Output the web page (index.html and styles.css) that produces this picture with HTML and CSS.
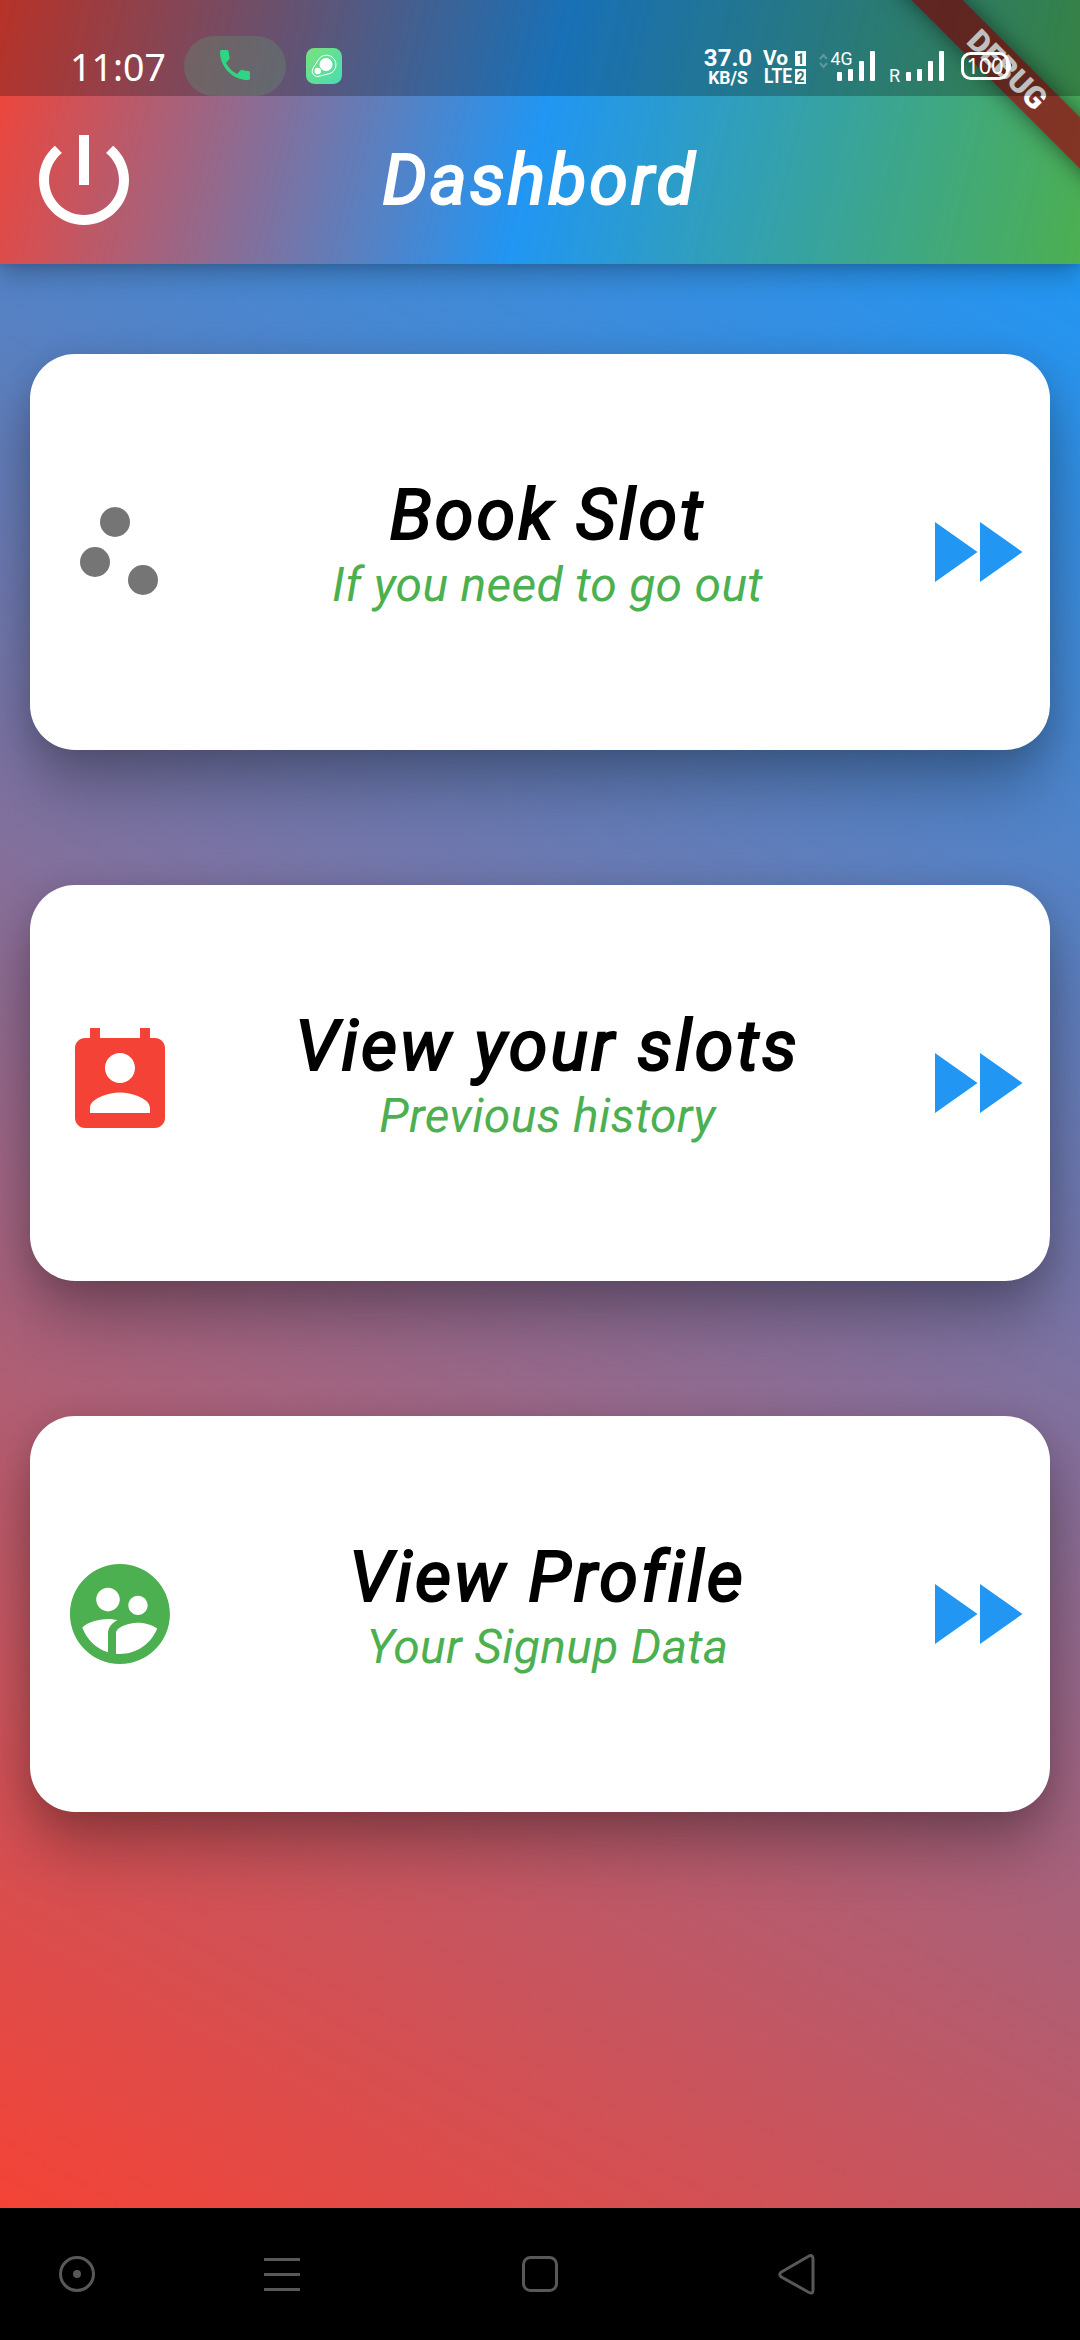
FILE: index.html
```
<!DOCTYPE html>
<html lang="en">
<head>
<meta charset="utf-8">
<title>Dashbord</title>
<link rel="stylesheet" href="styles.css">
</head>
<body>
<div class="phone">
  <header class="header">
    <div class="status">
      <span class="clock">11:07</span>
      <span class="call"><svg viewBox="0 0 30 30" width="30" height="30"><path fill="#2ed583" d="M0 1.7C0 .7.7 0 1.700 0h5.200c.9 0 1.600.7 1.700 1.600.1 2 .500 4 1.100 5.900.2.600 0 1.200-.4 1.700L6 12.900c2.400 4.700 6.300 8.600 11.100 11.100l3.500-3.700c.4-.4 1.100-.6 1.700-.4 1.900.600 3.900 1 5.900 1.100 1 0 1.800.7 1.800 1.600v5.700c0 1-.8 1.700-1.700 1.700C12.700 30 0 17.300 0 1.700z"/></svg></span>
      <svg class="app" viewBox="0 0 36 36" width="36" height="36"><defs><linearGradient id="g" x1="0" y1="0" x2="1" y2="1"><stop offset="0" stop-color="#7be27a"/><stop offset="1" stop-color="#48dcb4"/></linearGradient></defs><rect width="36" height="36" rx="8.500" fill="url(#g)"/><path d="M12.500 11.500A9.500 9.500 0 1 1 24 25.500L14 28A5.400 5.400 0 0 1 6.800 20.600z" fill="none" stroke="#fff" stroke-width="1"/><circle cx="20" cy="16.500" r="6.500" fill="#fff"/><circle cx="11.700" cy="23" r="3.200" fill="#fff"/></svg>
      <span class="speed"><b>37.0</b><small>KB/S</small></span>
      <svg class="volte" viewBox="0 0 44 40" width="44" height="40"><text x="0" y="18" textLength="25" lengthAdjust="spacingAndGlyphs">Vo</text><text x="1" y="36" class="lte" textLength="28" lengthAdjust="spacingAndGlyphs">LTE</text><rect x="32" y="4" width="11" height="15"/><rect x="32" y="22" width="11" height="15"/><text x="33.500" y="16.500" class="sim">1</text><text x="33.500" y="34.500" class="sim">2</text></svg>
      <svg class="signal" viewBox="0 0 58 40" width="58" height="40"><path d="M2 13l3.500-4 3.500 4M2 17l3.500 4 3.500-4" fill="none" stroke="#fff" stroke-opacity=".25" stroke-width="2"/><g fill="#fff"><rect x="19" y="26" width="5" height="9" rx="1"/><rect x="30" y="23" width="5" height="12" rx="1"/><rect x="41" y="15" width="5" height="20" rx="1"/><rect x="52" y="5" width="5" height="30" rx="1"/></g><text x="12.500" y="19" class="net" textLength="22" lengthAdjust="spacingAndGlyphs">4G</text></svg>
      <svg class="roam" viewBox="0 0 56 34" width="56" height="34"><g fill="#fff"><rect x="17" y="21" width="5" height="9" rx="1"/><rect x="28" y="18" width="5" height="12" rx="1"/><rect x="39" y="10" width="5" height="20" rx="1"/><rect x="50" y="0" width="5" height="30" rx="1"/></g><text x="0" y="31" class="rtext">R</text></svg>
    </div>
    <div class="appbar">
      <svg class="icon" viewBox="0 0 24 24"><path d="M13 3h-2v10h2V3zm4.830 2.170l-1.420 1.420C17.990 7.860 19 9.810 19 12c0 3.870-3.130 7-7 7s-7-3.130-7-7c0-2.190 1.010-4.140 2.580-5.420L6.170 5.170C4.230 6.820 3 9.260 3 12c0 4.970 4.030 9 9 9s9-4.030 9-9c0-2.740-1.230-5.180-3.170-6.830z"/></svg>
      <h1>Dashbord</h1>
    </div>
    <div class="ribbon-clip"><div class="ribbon">DEBUG</div></div>
    <div class="scrim"></div>
    <svg class="battery" viewBox="0 0 52 30" width="52" height="30"><rect x="1.500" y="2.500" width="45" height="25" rx="8" fill="none" stroke="#fff" stroke-width="3"/><path d="M47 9q3 1 3 6t-3 6z" fill="#fff"/><text x="5.500" y="23" class="pct">100</text></svg>
  </header>
  <main class="cards">
    <section class="card">
      <svg class="icon" viewBox="0 0 24 24" fill="#757575"><circle cx="7" cy="14" r="3"/><circle cx="11" cy="6" r="3"/><circle cx="16.600" cy="17.600" r="3"/></svg>
      <div class="text"><h2>Book Slot</h2><p>If you need to go out</p></div>
      <svg class="icon" viewBox="0 0 24 24" fill="#2196f3"><path d="M4 18l8.500-6L4 6v12zm9-12v12l8.500-6L13 6z"/></svg>
    </section>
    <section class="card">
      <svg class="icon" viewBox="0 0 24 24" fill="#f44336"><path d="M19 3h-1V1h-2v2H8V1H6v2H5c-1.110 0-2 .9-2 2v14c0 1.100.89 2 2 2h14c1.100 0 2-.9 2-2V5c0-1.100-.9-2-2-2zm-7 3c1.660 0 3 1.340 3 3s-1.340 3-3 3-3-1.340-3-3 1.340-3 3-3zm6 12H6v-1c0-2 4-3.100 6-3.100s6 1.100 6 3.100v1z"/></svg>
      <div class="text"><h2>View your slots</h2><p>Previous history</p></div>
      <svg class="icon" viewBox="0 0 24 24" fill="#2196f3"><path d="M4 18l8.500-6L4 6v12zm9-12v12l8.500-6L13 6z"/></svg>
    </section>
    <section class="card">
      <svg class="icon" viewBox="0 0 24 24" fill="#4caf50"><path d="M11.990 2c-5.520 0-10 4.480-10 10s4.480 10 10 10 10-4.480 10-10-4.480-10-10-10zm3.610 6.340c1.070 0 1.930.86 1.930 1.930 0 1.070-.86 1.930-1.930 1.930-1.070 0-1.930-.86-1.930-1.930-.01-1.070.86-1.930 1.930-1.930zm-6-1.580c1.300 0 2.360 1.060 2.360 2.360 0 1.300-1.060 2.360-2.360 2.360s-2.360-1.060-2.360-2.360c0-1.310 1.050-2.360 2.360-2.360zm0 9.130v3.750c-2.400-.75-4.300-2.600-5.140-4.960 1.050-1.120 3.670-1.690 5.140-1.690.53 0 1.200.08 1.900.22-1.640.87-1.900 2.020-1.900 2.680zM11.990 20c-.27 0-.53-.01-.79-.04v-4.070c0-1.420 2.940-2.130 4.400-2.130 1.070 0 2.920.39 3.840 1.150-1.170 2.970-4.060 5.090-7.450 5.090z"/></svg>
      <div class="text"><h2>View Profile</h2><p>Your Signup Data</p></div>
      <svg class="icon" viewBox="0 0 24 24" fill="#2196f3"><path d="M4 18l8.500-6L4 6v12zm9-12v12l8.500-6L13 6z"/></svg>
    </section>
  </main>
  <nav class="nav">
    <svg viewBox="0 0 40 42" width="40" height="42"><circle cx="20" cy="21" r="16.500"/><circle cx="20" cy="21" r="4" class="dot"/></svg>
    <svg viewBox="0 0 40 42" width="40" height="42"><path d="M2 6.500h36M2 21.500h36M2 36.500h36"/></svg>
    <svg viewBox="0 0 40 42" width="40" height="42"><rect x="3.500" y="4.500" width="33" height="33" rx="7"/></svg>
    <svg viewBox="0 0 40 42" width="40" height="42"><path d="M4 19.300L32 3Q36 1.500 36 6V37Q36 41.500 32 39.500L4 23.700Q1.500 21.500 4 19.300z"/></svg>
  </nav>
</div>
</body>
</html>
```
FILE: styles.css
```
* { box-sizing: border-box; }
body { margin: 0; font-family: Roboto, sans-serif; background: #000; }
h1, h2, p { margin: 0; }
.phone { width: 1080px; height: 2340px; display: flex; flex-direction: column; overflow: hidden; }

.header {
  position: relative;
  z-index: 1;
  height: 264px;
  background: linear-gradient(103.74deg, #f44336, #2196f3, #4caf50);
  box-shadow: 0 12px 24px rgba(0, 0, 0, .22), 0 2px 8px rgba(0, 0, 0, .12);
}
.status {
  position: relative;
  height: 96px;
  display: flex;
  align-items: flex-start;
  color: #fff;
  z-index: 2;
}
.clock { font: 37.500px/44px "Noto Sans", sans-serif; margin: 45px 0 0 70px; width: 114px; }
.call {
  width: 102px; height: 60px; margin-top: 36px; padding-top: 14px; padding-left: 36px;
  border-radius: 30px; background: rgba(100, 130, 110, .45);
}
.call svg { display: block; }
.app { margin: 48px 0 0 20px; }
.speed { display: flex; flex-direction: column; align-items: center; margin: 47px 0 0 361px; width: 50px; }
.speed b { font-size: 24px; line-height: 22px; }
.speed small { font-size: 17.500px; line-height: 18px; font-weight: 700; }
.volte { margin: 47px 0 0 10px; fill: #fff; font: 700 19.500px Roboto, sans-serif; }
.volte .lte { font-size: 21px; }
.volte .sim { fill: #31726f; font-size: 14px; }
.signal { margin: 46px 0 0 11px; }
.roam { margin: 51px 0 0 13px; }
.net { font: 19px Roboto, sans-serif; fill: #fff; }
.rtext { font: 18px Roboto, sans-serif; fill: #fff; }
.pct { font: 22px "Noto Sans", sans-serif; fill: #fff; letter-spacing: -.3px; }
.battery { position: absolute; left: 961px; top: 51px; z-index: 2; }

.appbar { height: 168px; display: grid; grid-template-columns: 120px 1fr 120px; align-items: center; padding: 0 24px; }
.icon { width: 120px; height: 120px; display: block; flex: none; }
.appbar .icon { fill: #fff; }
h1, h2 {
  font-size: 70px; font-weight: 400; font-style: italic; letter-spacing: 3px; line-height: 84px; text-align: center;
  -webkit-text-stroke: 2.200px currentColor;
}
h1 { color: #fff; }

.ribbon-clip { position: absolute; inset: 0 0 0 auto; width: 264px; overflow: hidden; }
.ribbon {
  position: absolute; left: 41px; top: 52px; width: 300px; height: 36px;
  background: linear-gradient(rgba(183, 28, 28, .627), rgba(183, 28, 28, .627)), rgba(0, 0, 0, .46);
  color: #fff;
  box-shadow: 0 0 22px rgba(0, 0, 0, .5);
  font-size: 30.600px; line-height: 36px; font-weight: 900; text-align: center;
  transform: rotate(45deg);
}
.scrim { position: absolute; inset: 0 0 auto 0; height: 96px; background: rgba(0, 0, 0, .25); }

.cards {
  height: 1944px;
  padding: 90px 30px 0;
  display: flex;
  flex-direction: column;
  gap: 135px;
  background: linear-gradient(209.05deg, #2196f3, #f44336);
}
.card {
  height: 396px;
  padding: 0 15px 0 30px;
  display: flex;
  align-items: center;
  background: #fff;
  border-radius: 45px;
  box-shadow: 0 36px 60px rgba(0, 0, 0, .28), 0 6px 30px rgba(0, 0, 0, .12);
}
.text { flex: 1; text-align: center; padding-bottom: 18px; }
h2 { color: #000; }
.text p { font-size: 48px; line-height: 56px; font-style: italic; color: #4caf50; letter-spacing: .3px; }

.nav { height: 132px; display: flex; align-items: center; padding-left: 57px; }
.nav svg { fill: none; stroke: #585858; stroke-width: 3; }
.nav svg:nth-child(2) { margin-left: 165px; }
.nav svg:nth-child(3) { margin-left: 218px; }
.nav svg:nth-child(4) { margin-left: 217px; }
.nav .dot { fill: #585858; stroke: none; }
```
